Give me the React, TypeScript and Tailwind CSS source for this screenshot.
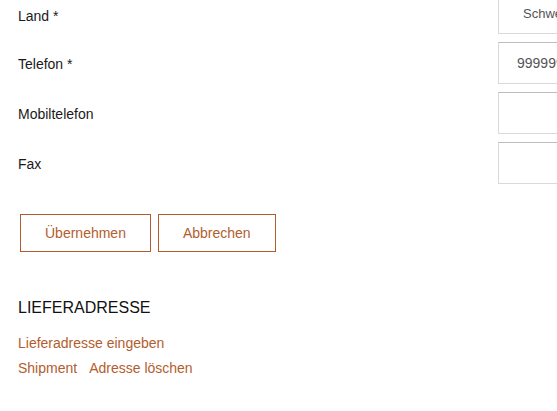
import React from "react";

const rows = [
  { label: "Land *", value: "Schweiz", select: true },
  { label: "Telefon *", value: "999999999" },
  { label: "Mobiltelefon", value: "" },
  { label: "Fax", value: "" },
];

export default function App() {
  return (
    <div className="w-[557px] h-[411px] overflow-hidden bg-white font-['Liberation_Sans',Arial,sans-serif] text-[14px] text-[#1a1a1a]">
      <div className="-mt-[6px] pl-[18px]">
        <div className="flex flex-col gap-2">
          {rows.map((r) => (
            <div key={r.label} className="flex items-center">
              <div className={`w-[480px] shrink-0 ${r.select ? "pt-[4px]" : "pt-[2px]"}`}>{r.label}</div>
              <div
                className={`w-[220px] shrink-0 border border-[#d9d9d9] border-t-[#bdbdbd] flex items-center text-[#555] ${
                  r.select ? "h-[40px] pl-[24px] text-[13px] border-t-[#d9d9d9]" : "h-[42px] pl-[18px] text-[14px]"
                }`}
              >
                {r.value}
              </div>
            </div>
          ))}
        </div>

        <div className="flex gap-[7px] mt-[30px] ml-[2px]">
          <button className="h-[38px] px-6 border border-[#b35d2e] text-[#b35d2e] bg-white text-[14px]">
            Übernehmen
          </button>
          <button className="h-[38px] px-6 border border-[#b35d2e] text-[#b35d2e] bg-white text-[14px]">
            Abbrechen
          </button>
        </div>

        <h2 className="mt-[46px] text-[16px] leading-[20px] text-[#111]">LIEFERADRESSE</h2>

        <div className="mt-[13px] text-[#b35d2e] text-[14px] leading-[25px]">
          <div>Lieferadresse eingeben</div>
          <div className="flex gap-3">
            <span>Shipment</span>
            <span>Adresse löschen</span>
          </div>
        </div>
      </div>
    </div>
  );
}
